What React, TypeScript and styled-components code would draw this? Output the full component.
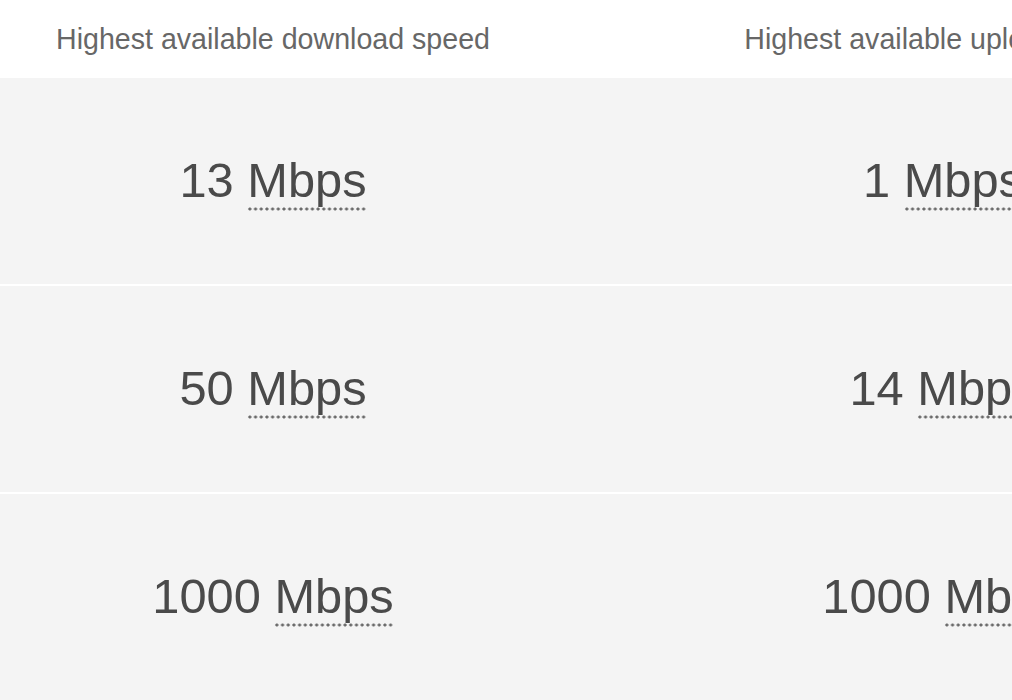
import React from "react";
import styled, { createGlobalStyle } from "styled-components";

const Global = createGlobalStyle`
  html, body {
    margin: 0;
    padding: 0;
    background: #ffffff;
    overflow: hidden;
  }
  body {
    font-family: "Liberation Sans", Arial, sans-serif;
  }
`;

const Viewport = styled.div`
  width: 1012px;
  height: 700px;
  overflow: hidden;
  background: #ffffff;
`;

const Table = styled.div`
  display: grid;
  grid-template-columns: 670px 670px;
  margin-left: -62px;
  width: 1340px;
`;

const HeaderCell = styled.div`
  height: 76px;
  display: flex;
  align-items: center;
  justify-content: center;
  background: #ffffff;
  color: #676767;
  font-size: 28.6px;
  white-space: nowrap;
  padding-top: 2px;
  box-sizing: border-box;
`;

const Cell = styled.div`
  height: 206px;
  border-top: 2px solid #ffffff;
  background: #f4f4f4;
  display: flex;
  align-items: center;
  justify-content: center;
  color: #4a4a4a;
  font-size: 48.8px;
  white-space: nowrap;
  box-sizing: content-box;
`;

const Value = styled.span`
  line-height: 1;
  margin-top: -2px;
`;

const Unit = styled.abbr`
  position: relative;
  text-decoration: none;
  cursor: help;
  &::after {
    content: "";
    position: absolute;
    left: 0;
    right: 0;
    bottom: -4px;
    height: 4px;
    background-image: radial-gradient(circle, #6a6a6a 1.3px, transparent 1.8px);
    background-size: 5.7px 4px;
    background-repeat: repeat-x;
    background-position: 0 0;
  }
`;

const rows: [string, string][] = [
  ["13", "1"],
  ["50", "14"],
  ["1000", "1000"],
];

export default function App() {
  return (
    <Viewport>
      <Global />
      <Table>
        <HeaderCell>Highest available download speed</HeaderCell>
        <HeaderCell>Highest available upload speed</HeaderCell>
        {rows.map(([down, up], i) => (
          <React.Fragment key={i}>
            <Cell>
              <Value>
                {down} <Unit title="Megabits per second">Mbps</Unit>
              </Value>
            </Cell>
            <Cell>
              <Value>
                {up} <Unit title="Megabits per second">Mbps</Unit>
              </Value>
            </Cell>
          </React.Fragment>
        ))}
      </Table>
    </Viewport>
  );
}
